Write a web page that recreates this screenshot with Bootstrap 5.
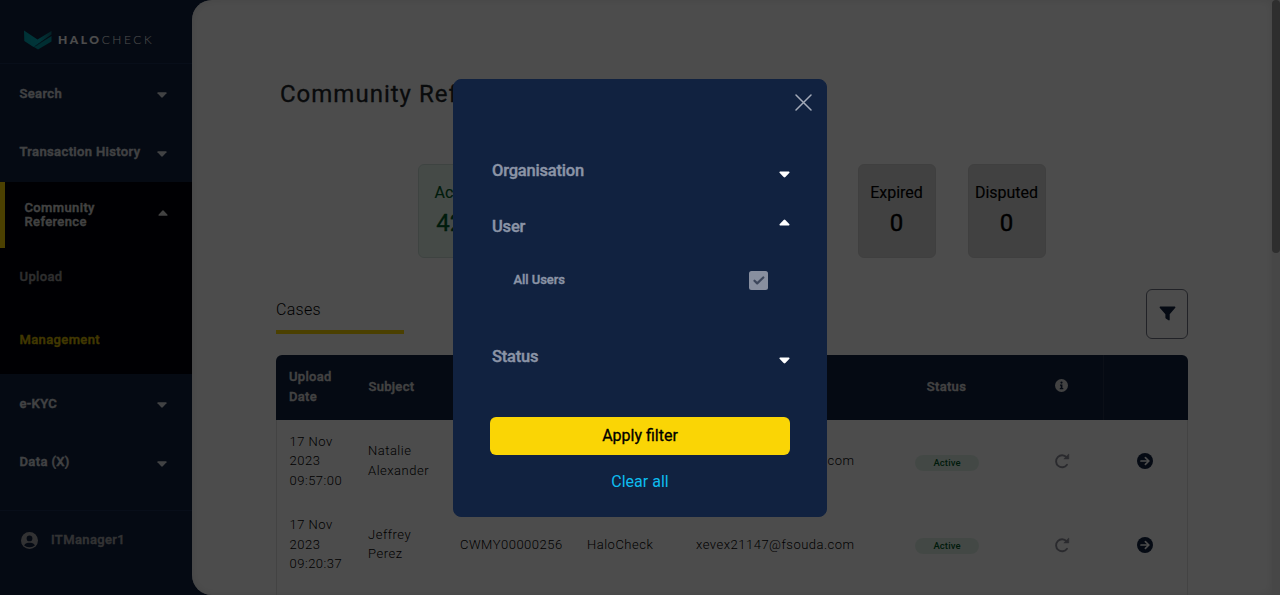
<!DOCTYPE html>
<html lang="en">
<head>
<meta charset="utf-8">
<meta name="viewport" content="width=device-width, initial-scale=1">
<title>HaloCheck - Community Reference</title>
<link href="https://cdn.jsdelivr.net/npm/bootstrap@5.3.0/dist/css/bootstrap.min.css" rel="stylesheet">
<style>
  body { font-family: Roboto, "Liberation Sans", sans-serif; height: 595px; background: #112240; color: #212529; }
  .side { width: 192px; color: #fff; font-size: 13px; letter-spacing: .37px; }
  .side-logo { height: 64px; padding: 17px 0 0 24px; border-bottom: 1px solid #1c3054; }
  .brand { font-size: 12px; letter-spacing: 2.55px; font-family: Lato, sans-serif; margin-left: 6px; }
  .brand b { font-weight: 900; }
  .brand span { font-weight: 300; }
  .heavy { font-weight: 500; -webkit-text-stroke: .4px currentColor; }
  .medium { font-weight: 400; -webkit-text-stroke: .3px currentColor; }
  .nav-row { height: 58px; padding: 0 25px 0 19.5px; line-height: 14px; opacity: .85; }
  .group { background: #00030a; height: 192px; }
  .group-head { height: 66px; border-left: 5px solid #fad505; padding: 0 24px 0 19.5px; line-height: 14px; color: #ddd; }
  .side-sub { padding-left: 19.5px; height: 63px; color: #9a9a9a; }
  .side-sub.current { color: #d9b905; }
  .side-user { margin-top: 20px; border-top: 1px solid #1c3054; height: 59px; padding-left: 21px; gap: 13px; color: #a9a9ac; }
  .arr { display: block; flex: none; }
  .page { background: #fff; border-radius: 20px 0 0 20px; padding: 0 84px 0 84px; box-shadow: inset 0 0 10px #e8e8e8; height: 595px; }
  .page-title { font-size: 24px; letter-spacing: 1px; padding: 76px 0 0 4px; line-height: 36px; margin: 0; white-space: nowrap; }
  .tiles { gap: 32px; margin: 52px 0 0 142px; }
  .tile { width: 78px; height: 94px; border-radius: 6px; background: #dadada; border: 1px solid #d3d3d3; color: #000; padding: 16px 1px 0 0; line-height: 24px; text-align: center; -webkit-text-stroke: .15px currentColor; }
  .tile strong { display: block; font-size: 24px; font-weight: 400; line-height: 36px; -webkit-text-stroke: .4px currentColor; }
  .tile.good { background: #e7f8ef; border-color: #cfe2da; color: #005c28; }
  .tab-line { margin-top: 31px; height: 50px; }
  .tab-cases { width: 128px; height: 45px; border-bottom: 4px solid #fad505; letter-spacing: .3px; padding-top: 9px; line-height: 24px; font-weight: 300; color: #000; }
  .btn-filter { width: 42px; height: 50px; border: 1px solid #707482; border-radius: 6px; padding: 0 0 2px; }
  .cases { margin-top: 15.5px; table-layout: fixed; width: 912px; font-size: 13px; letter-spacing: .5px; line-height: 19.5px; border-collapse: separate; border-spacing: 0; font-weight: 300; color: #000; }
  .cases th { background: #112240; color: #ddd; height: 65px; padding: 0 12px 0 13.5px; letter-spacing: .3px; line-height: 20px; font-weight: 500; }
  .cases th:first-child { border-radius: 6px 0 0 0; padding-left: 13px; }
  .cases th:last-child { border-radius: 0 6px 0 0; border-left: 1px solid #26344f; }
  .cases td { height: 83.5px; padding: 0 12px 1px 13px; vertical-align: middle; }
  .cases td:first-child { border-left: 1px solid #e2e2e2; padding-left: 12.5px; }
  .cases td:last-child { border-right: 1px solid #e2e2e2; }
  .cases .text-center { padding: 0 12px; }
  .cases svg { position: relative; top: -1px; }
  .pill-ok { display: inline-block; width: 64px; height: 16px; margin-right: -1px; border-radius: 8px; background: #e2f2e8; color: #005c28; font-size: 9.5px; line-height: 16px; font-weight: 500; letter-spacing: .1px; }
  .track { width: 8px; background: #eee; }
  .thumb { height: 253px; border-radius: 4px; background: #999; }
  .modal-backdrop { opacity: .7; }
  .filter-dialog { width: 374px; margin: 79px 0 0 453px; pointer-events: auto; }
  .filter-box { background: #112240; color: #fff; height: 437.5px; border: 1px solid #112240; border-radius: 8px; padding: 0 36px; }
  .soft { color: #8b94a6; }
  .fold { height: 56px; padding: 0 0 0 2px; font-size: 16.5px; letter-spacing: -.2px; }
  .opt { height: 50px; padding: 0 22px 0 23.5px; font-size: 13px; letter-spacing: -.05px; }
  .tick { width: 19px; height: 19px; border-radius: 2.5px; background: #888f9f; }
  .btn-apply, .btn-apply:hover { background: #fad505; color: #000; height: 38px; padding: 0; border: 0; border-radius: 6px; }
  .clear { color: #0dbdf0; line-height: 24px; }
</style>
</head>
<body class="d-flex overflow-hidden">
<svg width="0" height="0" class="position-absolute">
  <symbol id="down" viewBox="0 0 10 6"><path d="M1 .3h8q.9.2.5 1L5.8 5.3q-.8.7-1.6 0L.5 1.300Q.1.500 1 .3z" fill="currentColor"/></symbol>
  <symbol id="up" viewBox="0 0 10 6"><path d="M1 5.700h8q.9-.2.500-1L5.800.7q-.8-.7-1.600 0L.5 4.700Q.1 5.500 1 5.700z" fill="currentColor"/></symbol>
  <symbol id="redo" viewBox="0 0 16 16"><path d="M12.600 4.300A6 6 0 1 0 13 11.700" fill="none" stroke="currentColor" stroke-width="1.900" stroke-linecap="round"/><path d="M14.800 1v4.900H9.800z" fill="currentColor" stroke="currentColor" stroke-width=".6" stroke-linejoin="round"/></symbol>
  <symbol id="go" viewBox="0 0 16 16"><circle cx="8" cy="8" r="8" fill="#112240"/><path d="M4 8h7.500M8.400 4.600 11.900 8l-3.500 3.400" fill="none" stroke="#fff" stroke-width="1.700" stroke-linecap="round" stroke-linejoin="round"/></symbol>
</svg>

<nav class="side flex-shrink-0">
  <div class="side-logo d-flex align-items-center">
    <svg width="28" height="20" viewBox="0 0 28 20"><defs><linearGradient id="wing" x1="0" x2="1"><stop offset="0" stop-color="#00a6b4"/><stop offset=".55" stop-color="#00b4c2"/><stop offset="1" stop-color="#127080"/></linearGradient></defs><path d="M0 .500 13.500 9.500 27.500 1v3.500L13 14.500 9.500 17 .300 11z" fill="url(#wing)"/><path d="M27.500 6v5.500L14 19.500 9.500 16.700z" fill="#009aa8"/><path d="M11.500 16.200 27.500 5.600" stroke="#112240" stroke-width=".4"/></svg>
    <div class="brand"><b>HALO</b><span>CHECK</span></div>
  </div>
  <div class="nav-row d-flex justify-content-between align-items-center heavy" style="height:60px">Search<svg class="arr" style="margin-top:2px" width="10" height="6"><use href="#down"/></svg></div>
  <div class="nav-row d-flex justify-content-between align-items-center heavy" style="height:58px;padding-bottom:2px"><span class="text-nowrap">Transaction History</span><svg class="arr mt-1" width="10" height="6"><use href="#down"/></svg></div>
  <div class="group heavy">
    <div class="group-head d-flex justify-content-between align-items-center"><span>Community<br>Reference</span><svg class="arr mb-1" width="10" height="6"><use href="#up"/></svg></div>
    <div class="side-sub d-flex align-items-center" style="height:58px">Upload</div>
    <div class="side-sub current d-flex align-items-center" style="height:68px">Management</div>
  </div>
  <div class="nav-row d-flex justify-content-between align-items-center heavy" style="height:60px">e-KYC<svg class="arr" style="margin-top:2px" width="10" height="6"><use href="#down"/></svg></div>
  <div class="nav-row d-flex justify-content-between align-items-center heavy" style="height:56px">Data (X)<svg class="arr mt-1" width="10" height="6"><use href="#down"/></svg></div>
  <div class="side-user d-flex align-items-center heavy">
    <svg width="17" height="17" viewBox="0 0 16 16"><circle cx="8" cy="8" r="8" fill="currentColor"/><circle cx="8" cy="6" r="2.700" fill="#112240"/><path d="M2.800 12.400Q4.300 10.200 6.500 10h3q2.200.2 3.700 2.400A7 7 0 0 1 8 14.400a7 7 0 0 1-5.200-2z" fill="#112240"/></svg>
    <span>ITManager1</span>
  </div>
</nav>

<main class="page flex-grow-1 overflow-hidden">
  <h1 class="page-title medium">Community Reference</h1>
  <div class="tiles d-flex">
    <div class="tile good">Active<strong>423</strong></div>
    <div class="tile"></div><div class="tile"></div><div class="tile"></div>
    <div class="tile">Expired<strong>0</strong></div>
    <div class="tile">Disputed<strong>0</strong></div>
  </div>
  <div class="tab-line d-flex justify-content-between">
    <div class="tab-cases">Cases</div>
    <button class="btn btn-filter d-flex align-items-center justify-content-center" aria-label="Filter">
      <svg width="17" height="15" viewBox="0 0 17 15"><path d="M1.200.5h14.600q1 .3.500 1.300L10.700 8.200v5.600q-.2.900-1.200.5L6.800 12.500q-.4-.4-.4-.9V8.200L.700 1.800Q.200.800 1.200.5z" fill="#112240"/></svg>
    </button>
  </div>
  <table class="cases">
    <colgroup><col style="width:79px"><col style="width:92px"><col style="width:127px"><col style="width:109px"><col style="width:190px"><col style="width:147px"><col style="width:83px"><col></colgroup>
    <thead><tr class="heavy">
      <th>Upload Date</th><th>Subject</th><th></th><th></th><th></th><th class="text-center">Status</th>
      <th class="text-center"><svg style="top:-2px" width="13" height="13" viewBox="0 0 13 13"><circle cx="6.500" cy="6.500" r="6.500" fill="#ddd"/><circle cx="6.500" cy="3.600" r="1.100" fill="#112240"/><path d="M5 5.600h2.400v3.500h.9v1.200H4.800V9.100h.9V6.800H5z" fill="#112240"/></svg></th><th></th>
    </tr></thead>
    <tbody>
      <tr><td>17 Nov 2023 09:57:00</td><td>Natalie Alexander</td><td></td><td></td><td>xevex21147@fsouda.com</td><td class="text-center"><span class="pill-ok">Active</span></td><td class="text-center"><svg width="16" height="16" color="#8d8e99"><use href="#redo"/></svg></td><td class="text-center"><svg width="16" height="16"><use href="#go"/></svg></td></tr>
      <tr><td>17 Nov 2023 09:20:37</td><td>Jeffrey Perez</td><td>CWMY00000256</td><td>HaloCheck</td><td>xevex21147@fsouda.com</td><td class="text-center"><span class="pill-ok">Active</span></td><td class="text-center"><svg width="16" height="16" color="#8d8e99"><use href="#redo"/></svg></td><td class="text-center"><svg width="16" height="16"><use href="#go"/></svg></td></tr>
      <tr><td></td><td></td><td></td><td></td><td></td><td></td><td></td><td></td></tr>
    </tbody>
  </table>
</main>
<div class="track flex-shrink-0"><div class="thumb"></div></div>

<div class="modal-backdrop"></div>
<div class="modal d-block overflow-hidden" tabindex="-1">
  <div class="filter-dialog">
    <div class="filter-box">
      <div class="d-flex justify-content-end" style="height:63px;padding-top:14px;margin-right:-22px">
        <svg class="soft" width="17" height="17" viewBox="0 0 17 17"><path d="m1 1 15 15M16 1 1 16" stroke="#a3aab8" stroke-width="1.500" stroke-linecap="round"/></svg>
      </div>
      <div class="fold d-flex justify-content-between align-items-center"><span class="soft heavy">Organisation</span><svg class="arr" style="margin-top:6px" width="11" height="7"><use href="#down"/></svg></div>
      <div class="fold d-flex justify-content-between align-items-center"><span class="soft heavy">User</span><svg class="arr" style="margin-bottom:9px" width="11" height="7"><use href="#up"/></svg></div>
      <div class="opt d-flex justify-content-between align-items-center"><span class="soft heavy">All Users</span>
        <span class="tick d-flex align-items-center justify-content-center"><svg width="12" height="9" viewBox="0 0 12 9"><path d="m1.500 4.700 2.700 2.700L10.300 1.500" fill="none" stroke="#3c465b" stroke-width="2.200" stroke-linecap="round" stroke-linejoin="round"/></svg></span></div>
      <div class="fold d-flex justify-content-between align-items-center" style="margin-top:24px"><span class="soft heavy">Status</span><svg class="arr" style="margin-top:6px" width="11" height="7"><use href="#down"/></svg></div>
      <button class="btn btn-apply medium w-100" style="margin-top:32px">Apply filter</button>
      <div class="text-center clear" style="margin-top:15px">Clear all</div>
    </div>
  </div>
</div>
<script src="https://cdn.jsdelivr.net/npm/bootstrap@5.3.0/dist/js/bootstrap.bundle.min.js"></script>
</body>
</html>
